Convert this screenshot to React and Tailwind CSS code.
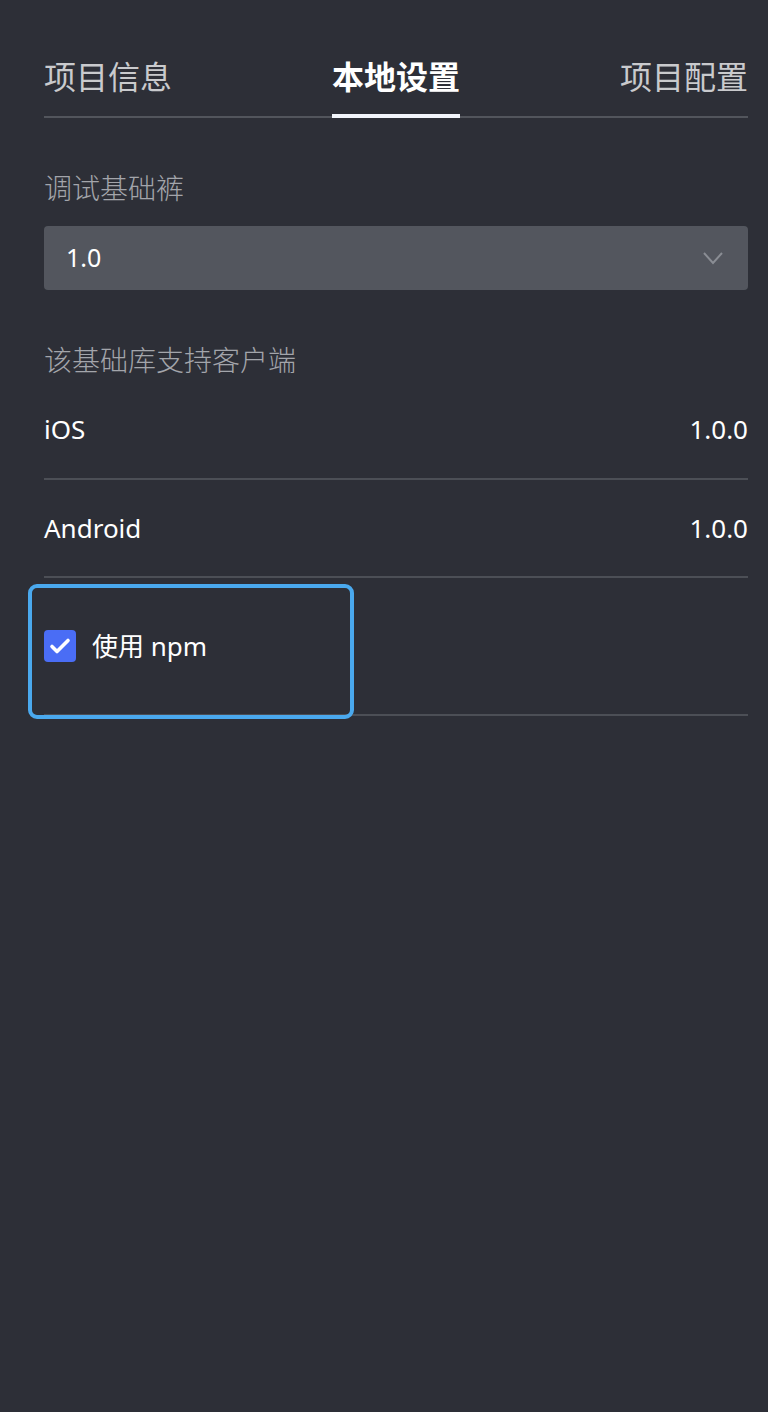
import React, { useState } from "react";

const font = { fontFamily: '"Noto Sans", "Noto Sans CJK SC", sans-serif' };

function Chevron() {
  return (
    <svg width="22" height="14" viewBox="0 0 22 14" fill="none">
      <path d="M2 2l9 10 9-10" stroke="#8a8d94" strokeWidth="2" />
    </svg>
  );
}

function Check() {
  return (
    <svg width="22" height="18" viewBox="0 0 22 18" fill="none">
      <path d="M3 9.5l5 5L19 3.5" stroke="#fff" strokeWidth="3.6" strokeLinecap="round" strokeLinejoin="round" />
    </svg>
  );
}

export default function App() {
  const [useNpm, setUseNpm] = useState(true);
  const tabs = ["项目信息", "本地设置", "项目配置"];

  return (
    <div className="w-[768px] h-[1412px] bg-[#2d2f37] text-white pl-[44px] pr-[20px]" style={font}>
      {/* tabs */}
      <div className="flex justify-between border-b-2 border-[#52555c] pt-[54px]">
        {tabs.map((t, i) => (
          <div
            key={t}
            className={
              i === 1
                ? "text-[32px] leading-[46px] font-bold text-white pb-[14px] -mb-[2px] border-b-4 border-[#f2f5fb]"
                : "text-[32px] leading-[46px] text-[#c9cacd] pb-[16px]"
            }
          >
            {t}
          </div>
        ))}
      </div>

      {/* base library */}
      <div className="mt-[50px] text-[28px] leading-[40px] font-light text-[#a3a5ab]">调试基础裤</div>
      <div className="mt-[18px] h-[64px] rounded-[4px] bg-[#53565e] flex items-center justify-between pl-[22px] pr-[24px]">
        <span className="text-[25px]">1.0</span>
        <Chevron />
      </div>

      <div className="mt-[50px] text-[28px] leading-[40px] font-light text-[#a3a5ab]">该基础库支持客户端</div>

      <div className="mt-[14px] flex justify-between items-center h-[86px] border-b-2 border-[#4c4f56] pb-[14px]">
        <span className="text-[26px]">iOS</span>
        <span className="text-[26px]">1.0.0</span>
      </div>
      <div className="flex justify-between items-center h-[98px] border-b-2 border-[#4c4f56]">
        <span className="text-[26px]">Android</span>
        <span className="text-[26px]">1.0.0</span>
      </div>

      {/* npm checkbox */}
      <div className="relative h-[138px] border-b-2 border-[#4c4f56] flex items-center">
        <label className="flex items-center gap-[16px] cursor-pointer" onClick={() => setUseNpm(!useNpm)}>
          <span className={"w-[32px] h-[32px] rounded-[4px] flex items-center justify-center " + (useNpm ? "bg-[#4a6df5]" : "bg-[#53565e]")}>
            {useNpm && <Check />}
          </span>
          <span className="text-[26px]">使用 npm</span>
        </label>
        <div className="absolute left-[-16px] top-[6px] w-[326px] h-[135px] rounded-[9px] border-[4px] border-[#4aa9ee] pointer-events-none" />
      </div>
    </div>
  );
}
